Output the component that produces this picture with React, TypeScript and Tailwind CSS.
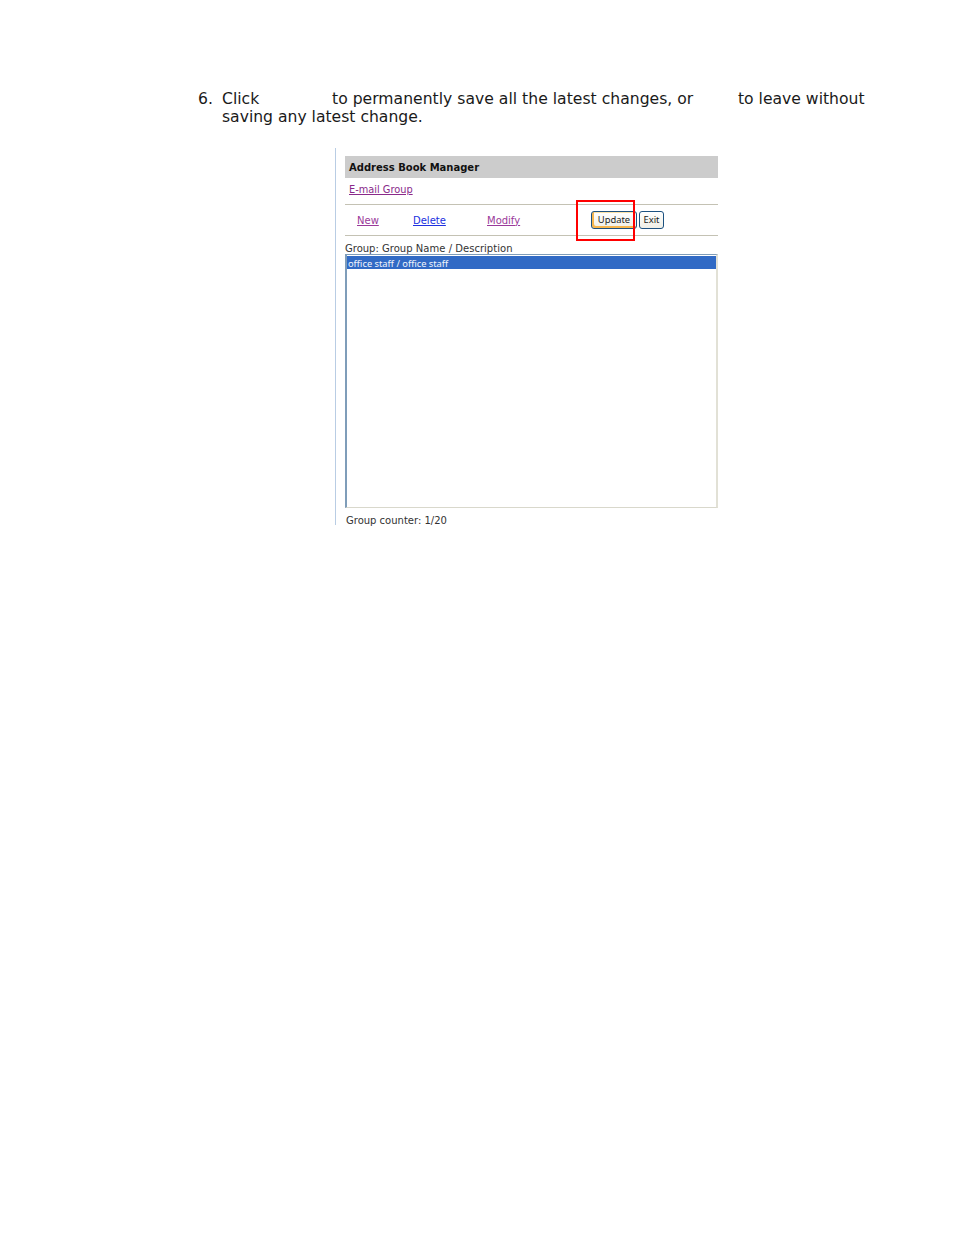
export default function App() {
  const ui = "font-['DejaVu_Sans',sans-serif]";
  const ctl = "font-['Noto_Sans',sans-serif]";
  return (
    <div className={`w-[954px] h-[1235px] bg-white pt-[90px] text-black ${ui}`}>
      <div className="ml-[198px] flex text-[15.6px] leading-[18px] text-[#1a1a1a] w-[680px]">
        <span className="w-[24px] shrink-0">6.</span>
        <div>
          <div className="flex whitespace-nowrap">
            <span className="w-[110px]">Click</span>
            <span className="w-[406px] tracking-[0.02px]">to permanently save all the latest changes, or</span>
            <span>to leave without</span>
          </div>
          <div className="whitespace-nowrap">saving any latest change.</div>
        </div>
      </div>
      <div className="relative ml-[335px] mt-[22px] w-[384px] h-[377px] border-l border-[#b9cde4] pl-[9px] pt-[8px]">
        <div className="w-[373px] h-[22px] bg-[#cccccc] pl-[4px] text-[10px] leading-[23px] font-bold text-[#111]">Address Book Manager</div>
        <div className="h-[26px] pl-[4px] pt-[6px] text-[9.8px] leading-[12px]">
          <span className="underline text-[#8a2a8a]">E-mail Group</span>
        </div>
        <div className="w-[373px] h-[32px] border-y border-[#c4c2b4] flex items-center text-[10px] relative">
          <span className="underline text-[#9a3a9a] ml-[12px] w-[56px]">New</span>
          <span className="underline text-[#2030e0] w-[74px]">Delete</span>
          <span className="underline text-[#9a3a9a] w-[104px]">Modify</span>
          <span className={`w-[46px] h-[18px] rounded-[3px] border border-[#1c5180] bg-gradient-to-b from-white to-[#f0efe6] shadow-[inset_2px_-2px_0_#f6b64e,inset_0_1px_0_#fbe2a8] text-[9.4px] leading-[15px] text-center text-[#222] ${ctl}`}>Update</span>
          <span className={`w-[25px] h-[18px] ml-[2px] rounded-[3px] border border-[#1c5180] bg-gradient-to-b from-white to-[#f0efe6] text-[9.4px] leading-[15px] text-center text-[#222] ${ctl}`}>Exit</span>
        </div>
        <div className="text-[10px] leading-[11px] mt-[7px] text-[#333] flex whitespace-pre">
          <span className="w-[37px]">Group:</span>
          <span className="tracking-[0.03px]">Group Name / Description</span>
        </div>
        <div className="w-[373px] h-[254px] border border-[#7f9db9] border-l-2 border-r-2 border-r-[#e2e1d6] border-b-[#d9d8cc] pt-[1px]">
          <div className={`h-[13px] bg-[#316ac5] text-[#f2f6fc] text-[9.3px] leading-[15px] pl-[1px] ${ctl}`}>office staff / office staff</div>
        </div>
        <div className="text-[10px] leading-[12px] mt-[7px] ml-[1px] text-[#333]">Group counter: 1/20</div>
        <div className="absolute left-[240px] top-[52px] w-[59px] h-[41px] border-2 border-[#ff0000]"></div>
      </div>
    </div>
  );
}
